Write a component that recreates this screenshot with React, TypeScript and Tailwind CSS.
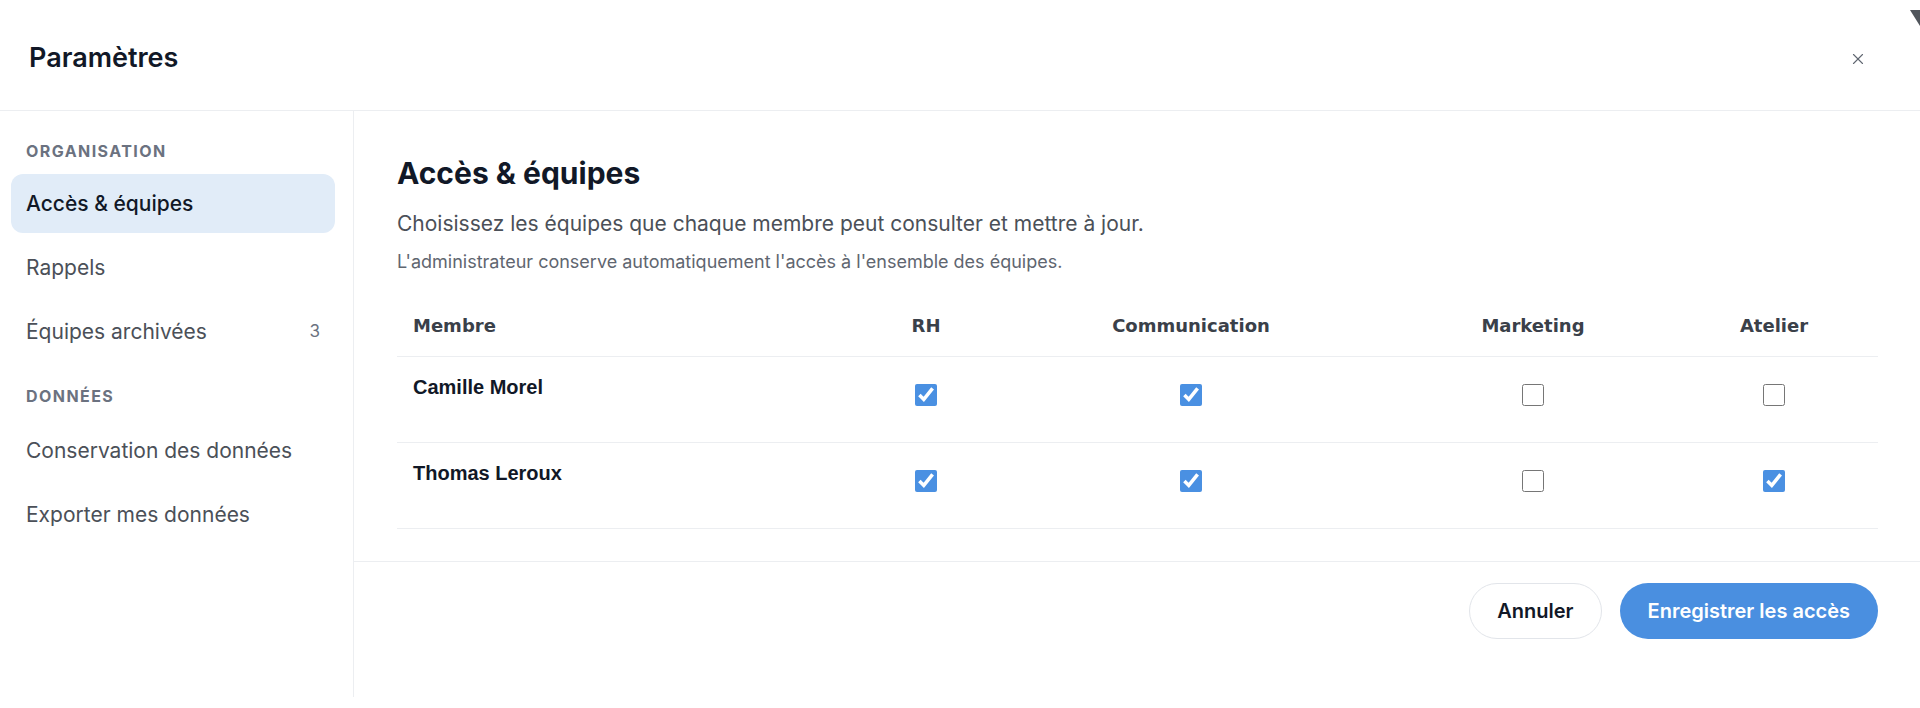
import { X } from "lucide-react";

const teams = ["RH", "Communication", "Marketing", "Atelier"];

const members = [
  { name: "Camille Morel", access: [true, true, false, false] },
  { name: "Thomas Leroux", access: [true, true, false, true] },
];

// column widths for the access table (member + one per team)
const colWidths = ["w-[469px]", "w-[120px]", "w-[410px]", "w-[274px]", "w-[208px]"];

function SectionLabel({ children, className = "" }: { children: string; className?: string }) {
  return (
    <div
      className={`px-[15px] h-[20px] text-[16px] leading-[20px] font-bold tracking-[0.09em] uppercase text-[#6b7280] ${className}`}
    >
      {children}
    </div>
  );
}

function NavItem({ label, active = false, count }: { label: string; active?: boolean; count?: number }) {
  return (
    <div
      className={`flex h-[59px] items-center justify-between rounded-[12px] px-[15px] text-[21px] ${
        active ? "bg-[#e1ecf8] font-medium text-[#111827]" : "text-[#4b5058]"
      }`}
    >
      <span>{label}</span>
      {count !== undefined && <span className="text-[17px] text-[#6b7280]">{count}</span>}
    </div>
  );
}

export default function App() {
  return (
    <div className="relative h-[708px] w-full overflow-hidden bg-white" style={{ fontFamily: "Inter, 'Liberation Sans', sans-serif" }}>
      {/* corner of the window behind the dialog */}
      <svg className="absolute right-0 top-[10px]" width="10" height="16" viewBox="0 0 10 16">
        <polygon points="0,0 10,0 10,16" fill="#50555b" />
      </svg>

      {/* header */}
      <div className="flex h-[111px] items-center justify-between border-b border-[#eceef1] pl-[29px] pr-[53px] pt-[7px]">
        <h1 className="text-[27px] font-semibold text-[#111827]">Paramètres</h1>
        <X size={18} strokeWidth={1.5} className="text-[#5f6670]" />
      </div>

      <div className="flex h-[586px]">
        {/* sidebar */}
        <aside className="w-[354px] shrink-0 border-r border-[#eceef1] pl-[11px] pr-[18px] pt-[30px]">
          <SectionLabel className="mb-[13px]">Organisation</SectionLabel>
          <div className="flex flex-col gap-[5px]">
            <NavItem label="Accès & équipes" active />
            <NavItem label="Rappels" />
            <NavItem label="Équipes archivées" count={3} />
          </div>
          <SectionLabel className="mb-[15px] mt-[25px]">Données</SectionLabel>
          <div className="flex flex-col gap-[5px]">
            <NavItem label="Conservation des données" />
            <NavItem label="Exporter mes données" />
          </div>
        </aside>

        {/* main panel */}
        <main className="flex flex-1 flex-col">
          <section className="px-[43px] pb-[32px] pt-[44px]">
            <h2 className="text-[30px] font-bold leading-[36px] text-[#111827]">Accès &amp; équipes</h2>
            <p className="mt-[19px] text-[21px] leading-[28px] text-[#4b5058]">
              Choisissez les équipes que chaque membre peut consulter et mettre à jour.
            </p>
            <p className="mt-[12px] text-[18px] leading-[24px] text-[#5f6670]">
              L'administrateur conserve automatiquement l'accès à l'ensemble des équipes.
            </p>

            <table className="mt-[22px] w-[1481px] table-fixed border-collapse">
              <thead>
                <tr className="border-b border-[#eceef1]">
                  <th
                    className={`${colWidths[0]} py-[18px] pl-[16px] text-left text-[18px] font-bold leading-[24px] text-[#3a4049]`}
                    style={{ fontFamily: "'DejaVu Sans', sans-serif" }}
                  >
                    Membre
                  </th>
                  {teams.map((team, i) => (
                    <th
                      key={team}
                      className={`${colWidths[i + 1]} py-[18px] text-center text-[18px] font-bold leading-[24px] text-[#3a4049]`}
                      style={{ fontFamily: "'DejaVu Sans', sans-serif" }}
                    >
                      {team}
                    </th>
                  ))}
                </tr>
              </thead>
              <tbody>
                {members.map((m) => (
                  <tr key={m.name} className="border-b border-[#eceef1]">
                    <td
                      className="h-[86px] pl-[16px] pt-[18px] align-top text-[20px] font-bold leading-[24px] text-[#111827]"
                      style={{ fontFamily: "'Liberation Sans', Arial, sans-serif" }}
                    >
                      {m.name}
                    </td>
                    {m.access.map((on, i) => (
                      <td key={teams[i]} className="pt-[27px] text-center align-top">
                        <input
                          type="checkbox"
                          defaultChecked={on}
                          className="m-0 h-[22px] w-[22px] accent-[#4a90e2]"
                        />
                      </td>
                    ))}
                  </tr>
                ))}
              </tbody>
            </table>
          </section>

          {/* footer actions */}
          <div className="flex justify-end gap-[18px] border-t border-[#eceef1] px-[43px] pt-[21px]">
            <button className="h-[56px] rounded-full border border-[#e2e5ea] bg-white px-[27px] text-[20px] font-semibold text-[#111827]">
              Annuler
            </button>
            <button className="h-[56px] rounded-full bg-[#4a8fe0] px-[28px] text-[20px] font-semibold text-white">
              Enregistrer les accès
            </button>
          </div>
        </main>
      </div>
    </div>
  );
}
